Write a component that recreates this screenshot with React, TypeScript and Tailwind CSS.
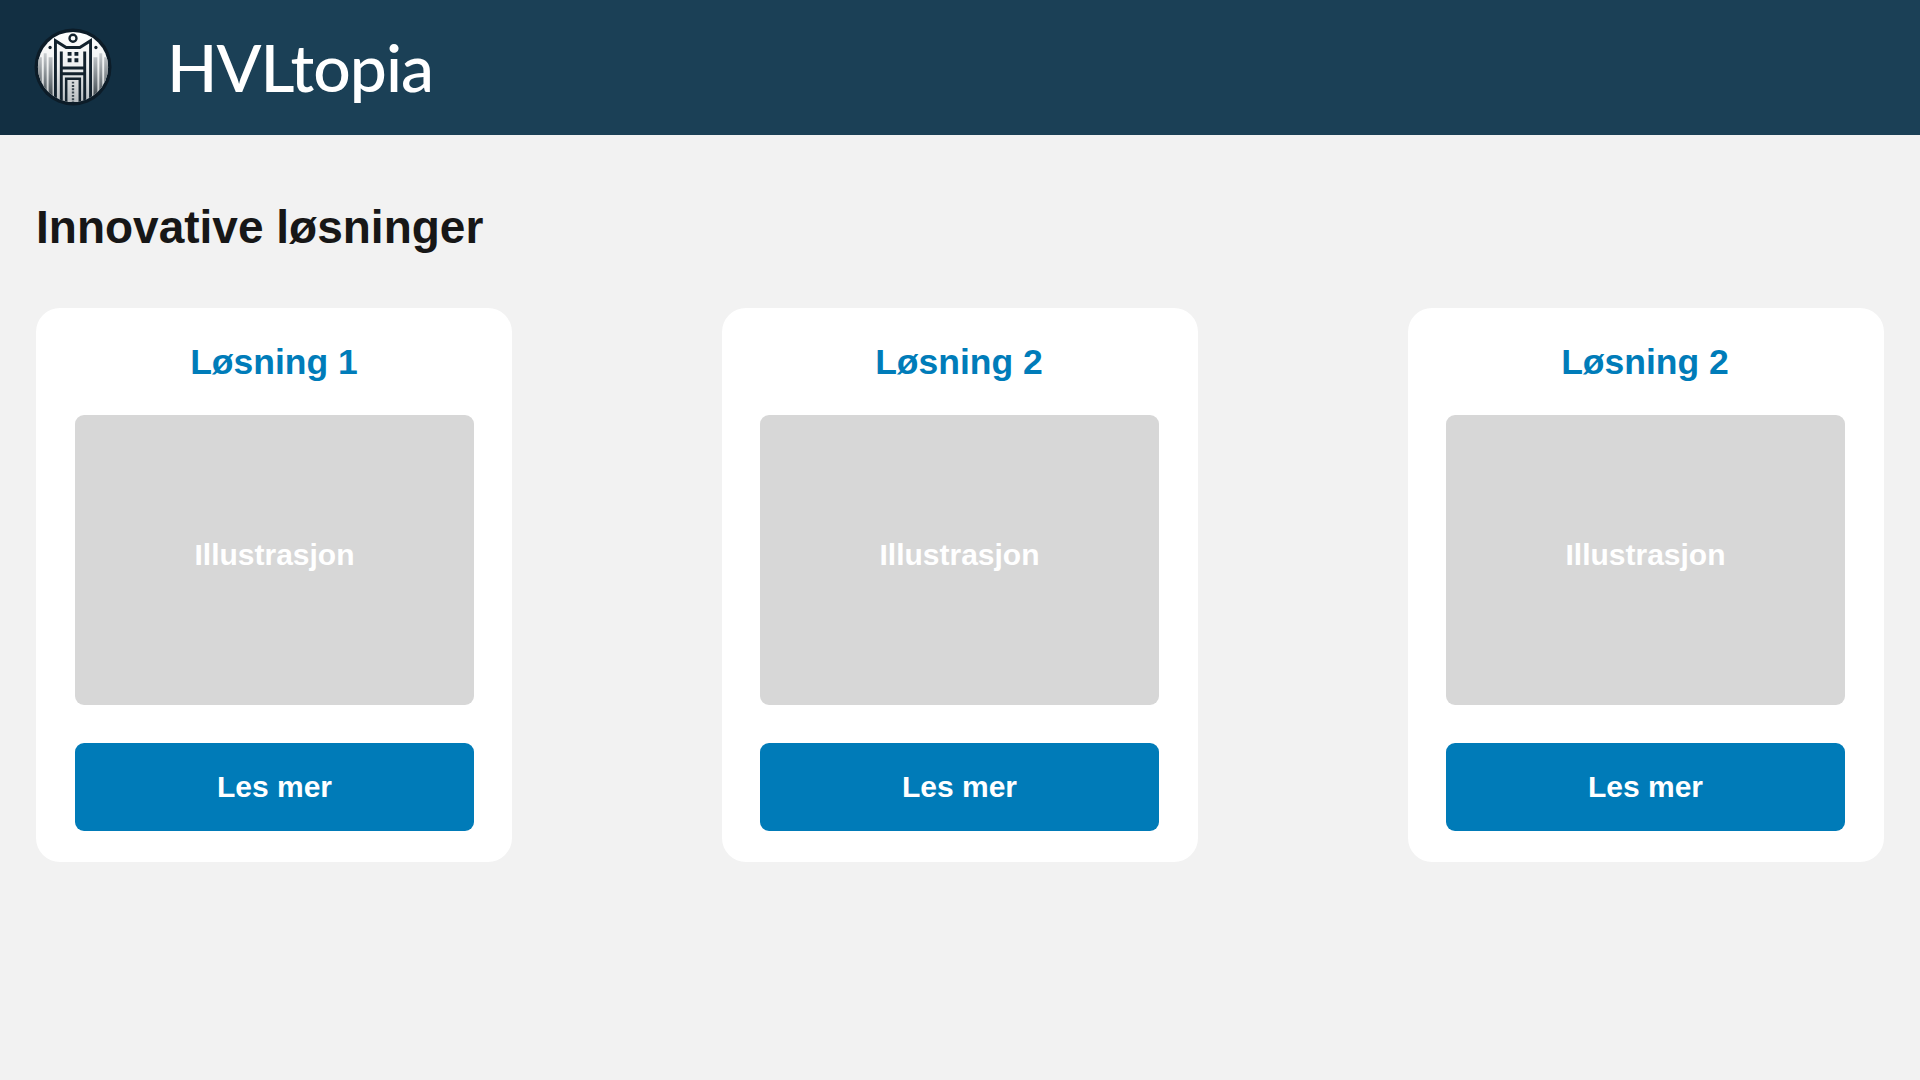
const Logo = () => {
  return (
    <svg width="78" height="78" viewBox="0 0 80 80" className="shrink-0">
      <defs>
        <linearGradient id="disc" x1="0" y1="0" x2="0" y2="1">
          <stop offset="0" stopColor="#ffffff" />
          <stop offset="0.5" stopColor="#eef0f0" />
          <stop offset="1" stopColor="#b9bec1" />
        </linearGradient>
        <linearGradient id="side" x1="0" y1="0" x2="0" y2="1">
          <stop offset="0" stopColor="#c9cdd0" />
          <stop offset="0.55" stopColor="#6f777c" />
          <stop offset="1" stopColor="#1f2a31" />
        </linearGradient>
        <clipPath id="discClip">
          <circle cx="40" cy="40" r="36" />
        </clipPath>
      </defs>
      <circle cx="40" cy="40" r="39.500" fill="#0c1c28" />
      <circle cx="40" cy="40" r="36" fill="url(#disc)" />
      <g clipPath="url(#discClip)">
        {/* side towers */}
        <path d="M2 30H8V80H2ZM10 26H13V80H10ZM15 30H19V80H15Z" fill="url(#side)" />
        <path d="M61 30H65V80H61ZM67 26H70V80H67ZM72 30H78V80H72Z" fill="url(#side)" />
        {/* H */}
        <path d="M22 80V13L33 20H47L58 13V80" fill="none" stroke="#13222d" strokeWidth="3" />
        <path d="M28 80V24M52 80V24" stroke="#13222d" strokeWidth="3" />
        <path d="M27 41H53M27 47H53" stroke="#13222d" strokeWidth="3" />
        {/* door */}
        <path d="M33 80V52H47V80" fill="none" stroke="#13222d" strokeWidth="2.600" />
        <path d="M40 55V76" stroke="#39464f" strokeWidth="2.400" strokeDasharray="2 1.400" />
        {/* top */}
        <circle cx="40" cy="10.500" r="3.600" fill="none" stroke="#13222d" strokeWidth="2.400" />
        <path d="M34.500 24.500h4v4h-4zM41.500 24.500h4v4h-4zM34.500 31h4v4h-4zM41.500 31h4v4h-4z" fill="#13222d" />
        <circle cx="16.500" cy="20" r="1.700" fill="#13222d" />
        <circle cx="63.500" cy="20" r="1.700" fill="#13222d" />
      </g>
    </svg>
  );
};

const SolutionCard = ({ title, inset }: { title: string; inset: string }) => (
  <div className={`flex h-[554px] w-[476px] flex-col rounded-[24px] bg-white pt-[32px] ${inset}`}>
    <h2 className="h-[44px] pr-[1px] text-center text-[35.500px] leading-[44px] font-bold text-[#007cb9]">
      {title}
    </h2>
    <div className="mt-[31px] flex h-[290px] items-center justify-center rounded-[9px] bg-[#d7d7d7] pb-[11px] text-[30px] font-bold text-white">
      Illustrasjon
    </div>
    <button className="mt-[38px] h-[88px] w-full rounded-[9px] bg-[#007bb8] pb-[2px] text-[30px] font-bold text-white">
      Les mer
    </button>
  </div>
);

export default function App() {
  return (
    <div className="min-h-screen bg-[#f2f2f2] font-['Liberation_Sans',Arial,sans-serif]">
      <header className="flex h-[135px] items-center bg-[#1b4056]">
        <div className="flex h-full w-[140px] items-center justify-center bg-[#122f42] pb-[2px] pl-[6px]">
          <Logo />
        </div>
        <div className="ml-[27px] pb-[2px] font-['Lato',sans-serif] text-[66px] leading-none font-medium tracking-[-1px] text-white">
          HVLtopia
        </div>
      </header>
      <main className="px-[36px] pt-[64px]">
        <h1 className="text-[46px] leading-[56px] font-bold text-[#171717]">
          Innovative løsninger
        </h1>
        <div className="mt-[53px] flex justify-between">
          <SolutionCard title="Løsning 1" inset="pl-[39px] pr-[38px]" />
          <SolutionCard title="Løsning 2" inset="pl-[38px] pr-[39px]" />
          <SolutionCard title="Løsning 2" inset="pl-[38px] pr-[39px]" />
        </div>
      </main>
    </div>
  );
}
